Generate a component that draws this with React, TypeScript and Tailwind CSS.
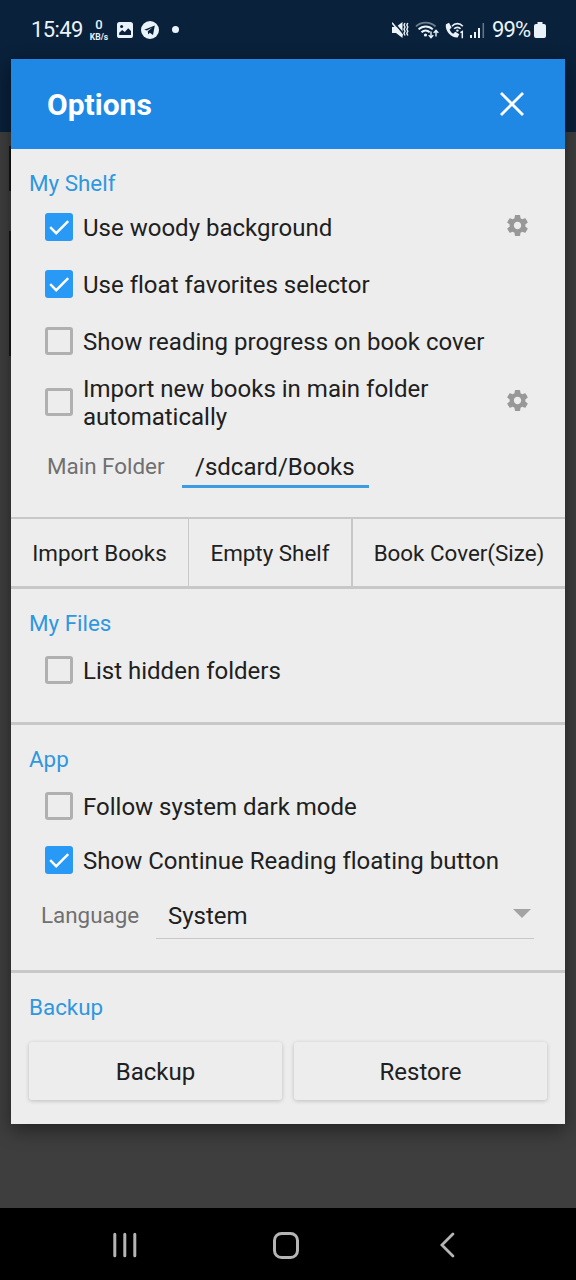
import type { ReactNode } from 'react';

interface CheckRowProps {
  label: ReactNode;
  checked?: boolean;
  settings?: boolean;
  className: string;
}

function GearIcon() {
  return (
    <svg viewBox="2.2 2 19.6 20" className="mb-[3px] h-[21px] w-[21px] shrink-0 fill-[#989898]">
      <path d="M19.43 12.98c.04-.32.07-.64.07-.98s-.03-.66-.07-.98l2.11-1.65c.19-.15.24-.42.12-.64l-2-3.46c-.12-.22-.39-.3-.61-.22l-2.49 1c-.52-.4-1.08-.73-1.69-.98l-.38-2.65C14.46 2.18 14.25 2 14 2h-4c-.25 0-.46.18-.49.42l-.38 2.65c-.61.25-1.17.59-1.69.98l-2.49-1c-.23-.09-.49 0-.61.22l-2 3.46c-.13.22-.07.49.12.64l2.11 1.65c-.04.32-.07.65-.07.98s.03.66.07.98l-2.11 1.65c-.19.15-.24.42-.12.64l2 3.46c.12.22.39.3.61.22l2.49-1c.52.4 1.08.73 1.69.98l.38 2.65c.03.24.24.42.49.42h4c.25 0 .46-.18.49-.42l.38-2.65c.61-.25 1.17-.59 1.69-.98l2.49 1c.23.09.49 0 .61-.22l2-3.46c.12-.22.07-.49-.12-.64l-2.11-1.65zM12 15.5c-1.93 0-3.5-1.57-3.5-3.5s1.57-3.5 3.5-3.5 3.5 1.57 3.5 3.5-1.57 3.5-3.5 3.5z" />
    </svg>
  );
}

function CheckBox({ checked }: { checked?: boolean }) {
  if (!checked) {
    return <span className="h-7 w-7 shrink-0 rounded-[3px] border-[3px] border-[#b0b0b0]" />;
  }
  return (
    <span className="h-7 w-7 shrink-0 rounded-[3px] bg-[#2899f5]">
      <svg viewBox="0 0 28 28" className="h-7 w-7 fill-none stroke-white" strokeWidth="2.4">
        <path d="M5.2 14.2l6 6L23.2 8.2" />
      </svg>
    </span>
  );
}

function CheckRow({ label, checked, settings, className }: CheckRowProps) {
  return (
    <div className={`flex items-center pr-[37px] pl-[34px] ${className}`}>
      <CheckBox checked={checked} />
      <span className="ml-2.5 flex-1 pt-[2px] text-2xl leading-7 tracking-[0.01px] whitespace-nowrap text-[#202020]">{label}</span>
      {settings && <GearIcon />}
    </div>
  );
}

function SectionTitle({ children }: { children: ReactNode }) {
  return <h2 className="pl-[18px] text-[22.4px] leading-8 text-[#2f97e0]">{children}</h2>;
}

function StatusBar() {
  return (
    <div className="flex h-[59px] items-center pl-[31px] text-[#eaf3f9]">
      <span className="w-[52px] text-[22px] leading-7 tracking-[-0.6px] whitespace-nowrap">15:49</span>
      <span className="ml-1.5 flex w-5 flex-col items-center">
        <span className="text-[13px] leading-[15px] font-medium">0</span>
        <span className="text-[8.5px] leading-[10px] font-bold">KB/s</span>
      </span>
      <svg viewBox="0 0 16 16" className="ml-2 h-4 w-4">
        <rect width="16" height="16" rx="2.6" fill="currentColor" />
        <circle cx="4.6" cy="4.6" r="1.5" fill="#09213a" />
        <path d="M2.2 13v-2.2l3-2.7 2.6 2 3.4-3.9 2.8 2.9V13z" fill="#09213a" />
      </svg>
      <svg viewBox="0 0 18 18" className="ml-2 h-[18px] w-[18px]">
        <circle cx="9" cy="9" r="9" fill="currentColor" />
        <path d="M3.2 8.8l10.6-4.3-1.8 9.6-3.2-2.3-1.6 1.6-.4-3.2 4.6-3.6-5.6 3z" fill="#09213a" />
      </svg>
      <span className="ml-[13px] h-[7px] w-[7px] rounded-full bg-current" />

      {/* Vibrate */}
      <svg viewBox="0 0 17 18" className="ml-[213px] h-[18px] w-[17px]">
        <path d="M0 6h4l6.5-5v16L4 12H0z" fill="currentColor" />
        <path d="M1.4 .8l10 12" stroke="#09213a" strokeWidth="1.6" />
        <path d="M0 1.8l10.5 12.6" stroke="currentColor" strokeWidth="1.6" />
        <path d="M13 2l-1 2 1 2-1 2.2 1 2-1 2 1 2.3M15.8 2l-1 2 1 2-1 2.2 1 2-1 2 1 2.3" fill="none" stroke="currentColor" strokeWidth="1.4" />
      </svg>
      <svg viewBox="0 0 24 18" className="ml-[6px] h-[18px] w-6 fill-none stroke-current">
        <path d="M1 5.5C6 .3 15 .3 20.5 5.5" opacity=".45" strokeWidth="1.8" />
        <path d="M3.6 8.4c4-4 10.2-4 14.2 0M6.5 11.3c2.4-2.3 5.8-2.3 8.2 0" strokeWidth="2" />
        <circle cx="10.5" cy="14" r="1.6" className="fill-current" stroke="none" />
        <path d="M16 10.5v6m-2.3-2.4l2.3 2.6 2.3-2.6M21 15.5V9.5m-2.3 2.4l2.3-2.6 2.3 2.6" strokeWidth="1.4" />
      </svg>
      <svg viewBox="0 0 19 18" className="ml-1.5 h-[18px] w-[19px]">
        <path d="M4 1.8L1 3.2C-.5 9 5.5 17 12.6 16.6l1.7-3.4-4-2.4-2.1 1.9c-1.8-1-2.8-2.3-3.6-4.2l2-1.9z" fill="currentColor" />
        <path d="M7 5.2c2.8-3.4 7.8-3.4 10.8 0M9.2 7.8c1.8-1.9 4.7-1.9 6.4 0" fill="none" stroke="currentColor" strokeWidth="1.6" />
        <circle cx="12.4" cy="9.6" r="1.2" fill="currentColor" />
        <path d="M15.4 11.6l1.9-1v6.6" fill="none" stroke="currentColor" strokeWidth="1.5" />
      </svg>
      <svg viewBox="0 0 15 16" className="mt-px ml-1.5 h-4 w-[15px] fill-current">
        <path d="M0 13h2v3H0zM4 10h2v6H4zM8 6h2v10H8z" />
        <path d="M12.5 1h1.6v15h-1.6z" opacity=".4" />
      </svg>
      <span className="ml-[7px] w-[39px] text-[22px] leading-7 tracking-[-0.9px] whitespace-nowrap">99%</span>
      <svg viewBox="0 0 12 16" className="ml-[3px] h-4 w-3 fill-current">
        <path d="M3.5 0h5v2H10a2 2 0 012 2v10a2 2 0 01-2 2H2a2 2 0 01-2-2V4a2 2 0 012-2h1.5z" />
      </svg>
    </div>
  );
}

function NavBar() {
  return (
    <div className="mt-auto flex h-[72px] items-center bg-black pt-[2px] pl-[113px] text-[#b5b5b5]">
      <svg viewBox="0 0 24 26" className="h-[26px] w-6 fill-none stroke-current" strokeWidth="3" strokeLinecap="round">
        <path d="M1.8 2.2v21.6M11.8 2.2v21.6M21.8 2.2v21.6" />
      </svg>
      <span className="ml-[136px] h-[27px] w-[26px] rounded-[8.5px] border-[3px] border-current" />
      <svg viewBox="0 0 15 26" className="ml-[141px] h-[26px] w-[15px] fill-none stroke-current" strokeWidth="2.8" strokeLinecap="round">
        <path d="M12.9 2L1.9 13l11 11" />
      </svg>
    </div>
  );
}

export default function App() {
  return (
    <div className="relative isolate flex h-[1280px] w-[576px] flex-col overflow-hidden bg-[#3e3e3e] font-['Roboto',sans-serif]">
      {/* Dimmed shelf page behind the dialog */}
      <div className="absolute inset-x-0 top-0 -z-10 h-[132px] bg-[#09213a]" />
      <div className="absolute top-[146px] left-[9px] -z-10 h-[45px] w-2 bg-[#141414]" />
      <div className="absolute top-[231px] left-[9px] -z-10 h-[125px] w-2 bg-[#171717]" />

      <StatusBar />

      <main className="mx-[11px] flex h-[1065px] w-[554px] flex-col bg-[#ededed] shadow-[0_6px_18px_rgba(0,0,0,0.45)]">
        <header className="flex h-[90px] shrink-0 items-center justify-between bg-[#1f88e5] pr-[41.5px] pl-9 text-white">
          <h1 className="pt-[2px] text-[30px] leading-9 font-bold">Options</h1>
          <svg viewBox="0 0 24 24" className="h-6 w-6 fill-none stroke-current" strokeWidth="2.8">
            <path d="M1 1l22 22M23 1L1 23" />
          </svg>
        </header>

        <section className="flex h-[368px] flex-col pt-[18px]">
          <SectionTitle>My Shelf</SectionTitle>
          <CheckRow className="-mt-px h-[57px]" label="Use woody background" checked settings />
          <CheckRow className="h-[57px]" label="Use float favorites selector" checked />
          <CheckRow className="h-[57px]" label="Show reading progress on book cover" />
          <CheckRow className="h-[65px]" label={<>Import new books in main folder<br />automatically</>} settings />
          <div className="flex pl-9 text-[#707070]">
            <span className="w-[135px] pt-4 text-[22.4px] leading-8">Main Folder</span>
            <span className="h-[54px] w-[187px] border-b-[3px] border-[#3c9be2] pt-[17px] pl-[13px] text-2xl leading-8 text-[#202020]">
              /sdcard/Books
            </span>
          </div>
        </section>

        <div className="flex h-[72px] shrink-0 border-t-2 border-b-[3px] border-[#c8c8c8] text-[22.4px] text-[#202020]">
          <button type="button" className="w-[178px] border-r border-[#c8c8c8] pt-[2px]">Import Books</button>
          <button type="button" className="w-[164px] border-r-2 border-[#c8c8c8] pt-[2px]">Empty Shelf</button>
          <button type="button" className="flex-1 pt-[2px]">Book Cover(Size)</button>
        </div>

        <section className="h-[136px] shrink-0 border-b-[3px] border-[#c8c8c8] pt-[18px]">
          <SectionTitle>My Files</SectionTitle>
          <CheckRow className="h-[62px]" label="List hidden folders" />
        </section>

        <section className="h-[248px] shrink-0 border-b-[3px] border-[#c8c8c8] pt-[18px]">
          <SectionTitle>App</SectionTitle>
          <CheckRow className="h-[62px]" label="Follow system dark mode" />
          <CheckRow className="h-[46px]" label="Show Continue Reading floating button" checked />
          <div className="flex pl-[30px]">
            <span className="w-[115px] pt-4 text-[22.4px] leading-8 text-[#707070]">Language</span>
            <span className="flex h-[56px] w-[378px] items-start justify-between border-b border-[#c8c8c8] pt-[17px] pr-[3px] pl-3 text-2xl leading-8 text-[#202020]">
              System
              <svg viewBox="0 0 18 9" className="mt-[9px] h-[9px] w-[18px] fill-[#a3a3a3]">
                <path d="M0 0h18l-9 9z" />
              </svg>
            </span>
          </div>
        </section>

        <section className="pt-[18px]">
          <SectionTitle>Backup</SectionTitle>
          <div className="mt-[19px] flex gap-3 px-[18px] text-2xl text-[#202020]">
            <button type="button" className="h-[58px] flex-1 rounded-[3px] pt-[2px] shadow-[0_1px_4px_rgba(0,0,0,0.2)]">Backup</button>
            <button type="button" className="h-[58px] flex-1 rounded-[3px] pt-[2px] shadow-[0_1px_4px_rgba(0,0,0,0.2)]">Restore</button>
          </div>
        </section>
      </main>

      <NavBar />
    </div>
  );
}
